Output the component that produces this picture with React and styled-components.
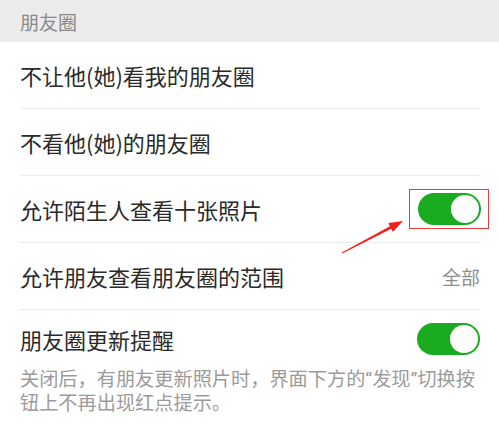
import React from "react";
import styled, { createGlobalStyle } from "styled-components";

const GlobalStyle = createGlobalStyle`
  html, body {
    margin: 0;
    padding: 0;
    background: #ffffff;
  }
  body {
    font-family: "Noto Sans CJK SC", "Noto Sans", sans-serif;
  }
`;

function Switch() {
  return (
    <Track>
      <Knob />
    </Track>
  );
}

function Arrow() {
  return (
    <ArrowSvg width="72" height="44" viewBox="0 0 72 44">
      <polygon
        points="6.8,37.6 54.9,11.2 53.3,8.1 68,6 57.9,16.9 56.3,13.8 7.2,38.4"
        fill="#f2221c"
      />
    </ArrowSvg>
  );
}

export default function App() {
  return (
    <Page>
      <GlobalStyle />
      <SectionTitle>朋友圈</SectionTitle>
      <List>
        <Row>
          <Label>不让他(她)看我的朋友圈</Label>
        </Row>
        <Row>
          <Label>不看他(她)的朋友圈</Label>
        </Row>
        <Row>
          <Label>允许陌生人查看十张照片</Label>
          <Highlight>
            <Switch />
          </Highlight>
        </Row>
        <Row>
          <Label>允许朋友查看朋友圈的范围</Label>
          <Value>全部</Value>
        </Row>
        <Row $compact $last>
          <Label>朋友圈更新提醒</Label>
          <Switch />
        </Row>
        <Hint>关闭后，有朋友更新照片时，界面下方的“发现”切换按钮上不再出现红点提示。</Hint>
      </List>
      <Arrow />
    </Page>
  );
}

const Page = styled.div`
  position: relative;
  width: 499px;
  height: 425px;
  overflow: hidden;
  background: #ffffff;
`;

const SectionTitle = styled.div`
  height: 42px;
  display: flex;
  align-items: center;
  padding: 0 20px;
  background: #ebebeb;
  color: #8a8a8a;
  font-size: 19px;
`;

const List = styled.div`
  display: flex;
  flex-direction: column;
  padding: 0 19px 0 20px;
`;

const Row = styled.div`
  display: flex;
  align-items: center;
  justify-content: space-between;
  height: ${(p) => (p.$compact ? "57px" : "66px")};
  border-bottom: ${(p) => (p.$last ? "none" : "1px solid #ececec")};
`;

const Label = styled.span`
  font-size: 22px;
  color: #2a2a2a;
  white-space: nowrap;
`;

const Value = styled.span`
  font-size: 19px;
  color: #8d8d8d;
`;

const Highlight = styled.div`
  display: flex;
  align-items: center;
  padding: 3px 7px 3px 8px;
  margin-right: -9px;
  border: 1.5px solid #ea3b3f;
`;

const Track = styled.div`
  width: 63px;
  height: 32px;
  border-radius: 16px;
  background: #1bab20;
  display: flex;
  align-items: center;
  justify-content: flex-end;
  padding: 2px;
  box-sizing: border-box;
`;

const Knob = styled.div`
  width: 28px;
  height: 28px;
  border-radius: 50%;
  background: #ffffff;
`;

const Hint = styled.p`
  margin: 0;
  padding: 1px 0 9px;
  font-family: "Roboto", "Noto Sans CJK SC", sans-serif;
  font-size: 19.2px;
  line-height: 24px;
  color: #9b9b9b;
  border-bottom: 1px solid #f0f0f0;
`;

const ArrowSvg = styled.svg`
  position: absolute;
  left: 335px;
  top: 215px;
`;
